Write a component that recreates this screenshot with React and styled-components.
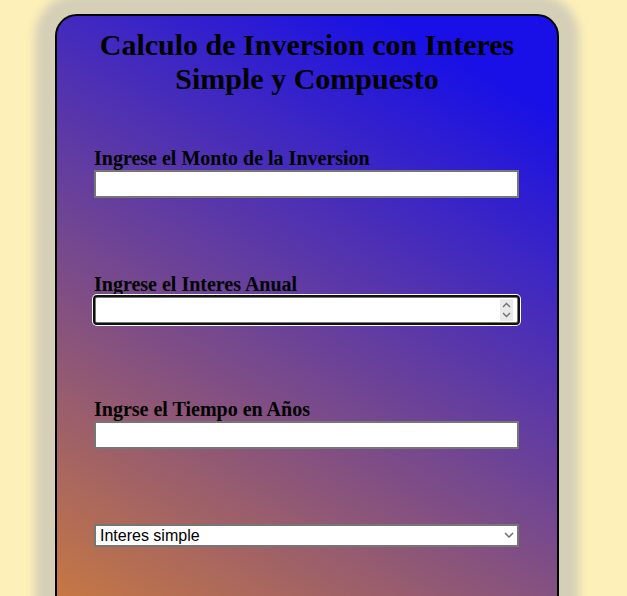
import React from "react";
import styled, { createGlobalStyle } from "styled-components";

const Global = createGlobalStyle`
  html, body { margin: 0; padding: 0; }
  body {
    background: #fdf0b8;
    font-family: "Liberation Serif", "Times New Roman", serif;
    overflow: hidden;
  }
`;

const Page = styled.div`
  padding: 14px 0 40px 55px;
`;

const Card = styled.div`
  box-sizing: border-box;
  width: 504px;
  min-height: 704px;
  border: 2px solid #000;
  border-radius: 22px;
  background: linear-gradient(30deg, rgb(218, 132, 48) 3%, rgb(24, 16, 230) 90%);
  box-shadow: 0 0 10px 20px #d6cfb8;
  padding: 12px 0 40px;
`;

const Title = styled.h1`
  margin: 0 0 51px;
  font-size: 30px;
  line-height: 34px;
  font-weight: bold;
  text-align: center;
  color: #000;
  padding: 0 30px;
`;

const Form = styled.form`
  display: flex;
  flex-direction: column;
  padding-left: 37px;
`;

const Field = styled.div`
  position: relative;
  width: 425px;
  margin-bottom: ${(p) => p.$gap}px;
  display: flex;
  flex-direction: column;
`;

const Label = styled.label`
  font-size: 20px;
  font-weight: bold;
  line-height: 22px;
  color: #000;
  margin-bottom: 1px;
`;

const Input = styled.input`
  box-sizing: border-box;
  width: 100%;
  height: 28px;
  margin: 0;
  padding: 1px 4px;
  border: 2px solid #767676;
  font-size: 16px;
  font-family: "Liberation Sans", Arial, sans-serif;
  background: #fff;
  -moz-appearance: textfield;
  &::-webkit-inner-spin-button,
  &::-webkit-outer-spin-button {
    -webkit-appearance: none;
    margin: 0;
  }
  &:focus {
    outline: 2px solid #101010;
    outline-offset: -1px;
    border-radius: 3px;
    box-shadow: 0 0 0 2px #fff;
  }
`;

const Spinner = styled.div`
  position: absolute;
  right: 6px;
  bottom: 3px;
  width: 13px;
  height: 22px;
  background: #e9e9e9;
  display: flex;
  flex-direction: column;
  align-items: center;
  justify-content: center;
  gap: 4px;
  pointer-events: none;
`;

const Select = styled.select`
  box-sizing: border-box;
  width: 100%;
  height: 23px;
  margin: 0;
  padding: 0 20px 0 4px;
  border: 2px solid #767676;
  border-radius: 0;
  font-size: 16px;
  font-family: "Liberation Sans", Arial, sans-serif;
  background: #fff;
  color: #000;
  appearance: none;
  -webkit-appearance: none;
`;

const Chevron = styled.svg`
  position: absolute;
  right: 5px;
  top: 8px;
  pointer-events: none;
`;

export default function App() {
  return (
    <>
      <Global />
      <Page>
        <Card>
          <Title>Calculo de Inversion con Interes Simple y Compuesto</Title>
          <Form onSubmit={(e) => e.preventDefault()}>
            <Field $gap={75}>
              <Label htmlFor="monto">Ingrese el Monto de la Inversion</Label>
              <Input id="monto" type="text" />
            </Field>
            <Field $gap={74}>
              <Label htmlFor="interes">Ingrese el Interes Anual</Label>
              <Input id="interes" type="number" autoFocus />
              <Spinner>
                <svg width="9" height="6" viewBox="0 0 9 6">
                  <path d="M1 5 L4.5 1.5 L8 5" fill="none" stroke="#6e6e6e" strokeWidth="1.3" />
                </svg>
                <svg width="9" height="6" viewBox="0 0 9 6">
                  <path d="M1 1 L4.5 4.5 L8 1" fill="none" stroke="#6e6e6e" strokeWidth="1.3" />
                </svg>
              </Spinner>
            </Field>
            <Field $gap={75}>
              <Label htmlFor="tiempo">Ingrse el Tiempo en Años</Label>
              <Input id="tiempo" type="text" />
            </Field>
            <Field $gap={40}>
              <Select defaultValue="simple">
                <option value="simple">Interes simple</option>
                <option value="compuesto">Interes compuesto</option>
              </Select>
              <Chevron width="10" height="6" viewBox="0 0 10 6">
                <path d="M1 1 L5 5 L9 1" fill="none" stroke="#6e6e6e" strokeWidth="1.5" />
              </Chevron>
            </Field>
          </Form>
        </Card>
      </Page>
    </>
  );
}
